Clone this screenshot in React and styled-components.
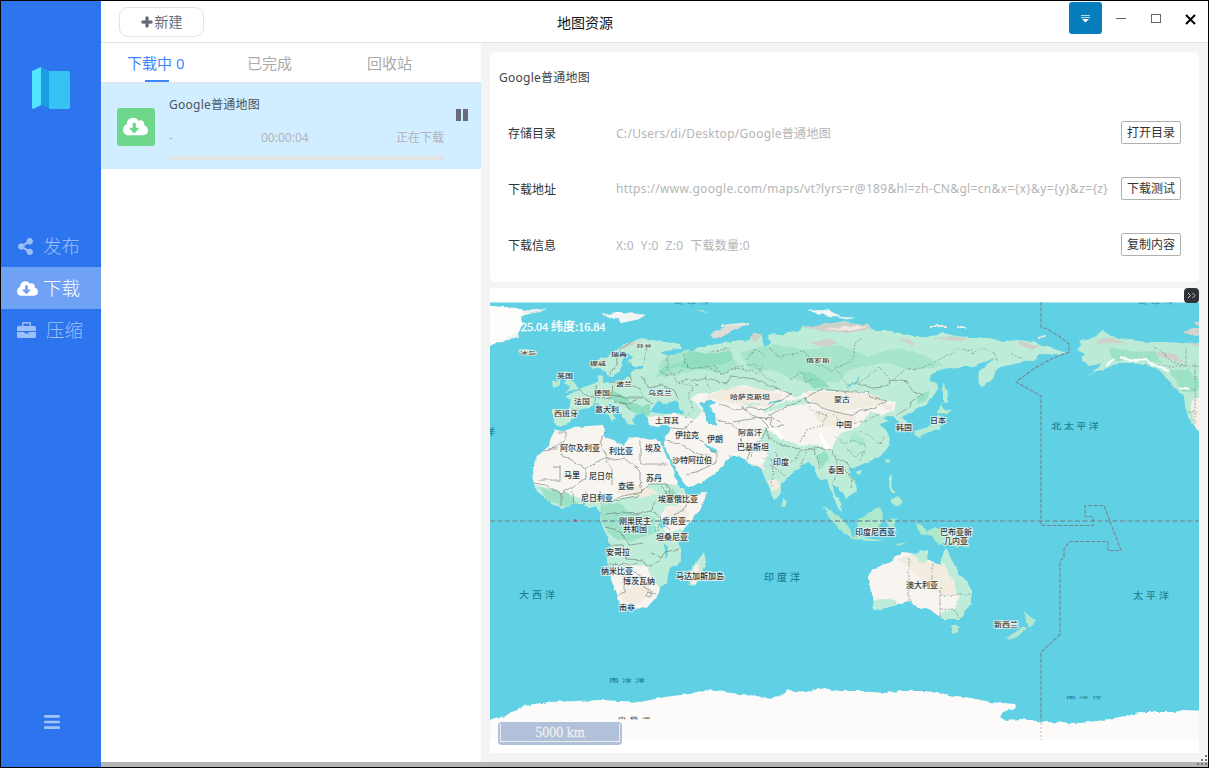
import React from "react";
import styled, { createGlobalStyle } from "styled-components";
import { FaPlus, FaShareAlt, FaCloudDownloadAlt, FaBars } from "react-icons/fa";

const sans = `"Noto Sans", "Noto Sans CJK SC", sans-serif`;
const cjk = `"Noto Sans CJK SC", sans-serif`;

const GlobalStyle = createGlobalStyle`
  * { box-sizing: border-box; }
  body { margin: 0; font-family: ${sans}; font-size: 12px; color: #444; overflow: hidden; }
  button { font: inherit; padding: 0; margin: 0; cursor: pointer; }
`;

const Window = styled.div`
  display: flex;
  width: 1209px;
  height: 768px;
  border: 1px solid #000;
  background: #fff;
`;

const Sidebar = styled.aside`
  display: flex;
  flex-direction: column;
  width: 100px;
  flex: none;
  background: #2d75ef;
`;

const Logo = styled.svg`
  display: block;
  width: 38px;
  height: 42px;
  margin: 66px 0 0 31px;
`;

const Nav = styled.nav`
  display: flex;
  flex-direction: column;
  margin-top: 116px;
`;

const NavItem = styled.div`
  display: flex;
  align-items: center;
  height: 42px;
  padding-left: ${(p) => p.$left || 16}px;
  gap: ${(p) => p.$gap}px;
  font-family: ${cjk};
  font-weight: 300;
  font-size: 18.500px;
  line-height: 40px;
  color: ${(p) => (p.$active ? "#fff" : "#9dc0f8")};
  background: ${(p) => (p.$active ? "#6fa1f5" : "transparent")};
  svg { flex: none; display: block; }
  span { height: 42px; }
`;

const MenuToggle = styled.div`
  margin: auto 0 36px 42px;
  height: 18px;
  color: #a4c3f8;
`;

const Main = styled.main`
  display: flex;
  flex-direction: column;
  flex: 1;
  min-width: 0;
`;

const Header = styled.header`
  display: flex;
  height: 42px;
  flex: none;
  border-bottom: 1px solid #e3e3e3;
`;

const NewButton = styled.button`
  display: flex;
  align-items: center;
  justify-content: center;
  gap: 2px;
  width: 85px;
  height: 30px;
  margin: 6px 0 0 18px;
  border: 1px solid #e4e4e4;
  border-radius: 9px;
  background: #fff;
  color: #666b78;
  font-family: ${cjk};
  font-size: 14px;
  line-height: 26px;
  padding-bottom: 2px;
  svg { stroke: currentColor; stroke-width: 40px; margin-top: 1px; }
`;

const Title = styled.h1`
  margin: 0 0 0 353px;
  width: 58px;
  white-space: nowrap;
  font: 400 14px/42px ${cjk};
  color: #111;
`;

const Controls = styled.div`
  display: flex;
  margin: 0 1px 0 auto;
  height: 36px;
`;

const SkinButton = styled.button`
  width: 33px;
  height: 32px;
  margin-top: 1px;
  border: 0;
  border-radius: 3px;
  background: #087dbb;
  svg { display: block; margin: 2px auto 0; }
`;

const ControlButton = styled.button`
  width: 35px;
  height: 36px;
  border: 0;
  background: none;
  svg { display: block; }
`;

const Content = styled.div`
  display: flex;
  height: 719px;
`;

const ListPane = styled.section`
  width: 380px;
  flex: none;
  background: #fff;
`;

const Tabs = styled.div`
  display: flex;
  height: 40px;
  padding-left: 26px;
  border-bottom: 1px solid #e3e3e3;
`;

const Tab = styled.div`
  display: flex;
  flex-direction: column;
  justify-content: space-between;
  width: 120px;
  flex: none;
  font-size: 15px;
  line-height: 38px;
  height: 39px;
  white-space: nowrap;
  color: ${(p) => (p.$active ? "#3f88fb" : "#aaa")};
  span { height: 37px; line-height: 41px; }
  &:last-child { width: 80px; }
`;

const TabMark = styled.i`
  display: block;
  width: 24px;
  height: 2px;
  margin-left: 18px;
  background: #3f88fb;
`;

const Task = styled.article`
  display: flex;
  height: 86px;
  padding-left: 16px;
  background: #d0eeff;
`;

const TaskIcon = styled.div`
  display: flex;
  align-items: center;
  justify-content: center;
  width: 38px;
  height: 38px;
  margin-top: 25px;
  padding: 0 1px 1px 0;
  border-radius: 3px;
  background: #6dd78b;
  color: #fff;
`;

const TaskBody = styled.div`
  width: 275px;
  margin-left: 14px;
`;

const TaskName = styled.div`
  margin-top: 12px;
  line-height: 20px;
  letter-spacing: .25px;
  color: #4d5560;
`;

const TaskMeta = styled.div`
  display: grid;
  grid-template-columns: 92px 1fr auto;
  margin-top: 13px;
  line-height: 20px;
  color: #b0b4b7;
`;

const Progress = styled.div`
  height: 4px;
  margin-top: 8px;
  background: #e3e3e3;
`;

const Pause = styled.div`
  display: flex;
  gap: 2px;
  margin: 26px 0 0 12px;
  i { width: 5px; height: 12px; background: #666b7b; }
`;

const DetailPane = styled.section`
  display: flex;
  flex-direction: column;
  flex: 1;
  gap: 6px;
  padding: 9px;
  background: #f4f4f4;
`;

const InfoCard = styled.div`
  height: 230px;
  flex: none;
  padding: 15px 18px 0;
  border-radius: 5px;
  background: #fff;
`;

const CardTitle = styled.div`
  margin-left: -9px;
  height: 22px;
  line-height: 22px;
  letter-spacing: .25px;
`;

const InfoRow = styled.div`
  display: flex;
  align-items: center;
  height: 23px;
  margin-top: ${(p) => (p.$first ? 32 : 33)}px;
`;

const RowLabel = styled.span`
  width: 108px;
  color: #333;
`;

const RowValue = styled.span`
  flex: 1;
  min-width: 0;
  color: #b5b5b5;
  white-space: pre;
  letter-spacing: ${(p) => p.$spacing}px;
`;

const RowButton = styled.button`
  width: 60px;
  height: 23px;
  border: 1px solid #b0b0b0;
  border-radius: 2px;
  background: #fff;
  color: #333;
  line-height: 20px;
`;

const MapCard = styled.div`
  position: relative;
  height: 465px;
  background: #fff;
  > svg.map { display: block; padding-top: 14px; box-sizing: content-box; }
`;

const Expand = styled.div`
  position: absolute;
  right: 0;
  top: 0;
  width: 15px;
  height: 15px;
  border-radius: 4px;
  background: #2f3336;
  svg { display: block; }
`;

const Coordinates = styled.div`
  position: absolute;
  left: 31px;
  top: 29px;
  color: #fff;
  font: 12px/20px "Liberation Serif", "Noto Sans CJK SC", serif;
  -webkit-text-stroke: .3px #fff;
  white-space: nowrap;
`;

const Scale = styled.div`
  position: absolute;
  left: 8px;
  top: 434px;
  width: 124px;
  height: 23px;
  padding: 2px;
  border-radius: 4px;
  background: #b1c1da;
`;

const ScaleBar = styled.div`
  height: 18px;
  border: 1px solid #eee;
  border-top: 0;
  color: #eee;
  text-align: center;
  font: 14px/17px "Liberation Serif", serif;
  -webkit-text-stroke: .3px #eee;
`;

const StatusBar = styled.footer`
  display: flex;
  justify-content: flex-end;
  height: 5px;
  background: #b4b4b4;
  svg { display: block; margin-top: -7px; overflow: visible; }
`;

// Country names: text, centre x, centre y, height factor, character pitch.
const countries = [
  ["冰岛", 528, 353, 0.5, 8], ["芬兰", 644, 346.5, 0.5, 8], ["瑞典", 619, 354, 0.55, 8], ["挪威", 598, 363.5, 0.55, 8],
  ["英国", 565, 376, 0.65, 8], ["波兰", 624, 384, 0.7, 8], ["德国", 602, 393, 0.75, 8], ["乌克兰", 660, 393, 0.75, 8],
  ["法国", 582, 402, 0.8, 8], ["西班牙", 566, 413, 0.85, 8], ["意大利", 607, 409, 0.85, 8], ["土耳其", 667, 420, 0.85, 8],
  ["伊拉克", 687, 435.5, 0.95, 8], ["伊朗", 715, 439.5, 0.95, 8], ["俄罗斯", 818, 360, 0.55, 8],
  ["哈萨克斯坦", 750, 396.5, 0.75, 8], ["蒙古", 842, 400, 0.8, 8], ["中国", 844, 424, 0.9, 8], ["韩国", 904, 427, 0.9, 8],
  ["日本", 938, 420, 0.9, 8], ["阿富汗", 750, 432.5, 0.9, 8], ["巴基斯坦", 753, 447, 0.95, 8], ["印度", 781, 462, 1, 8], ["泰国", 836, 469.5, 1, 8],
  ["阿尔及利亚", 580, 448, 0.95, 8], ["利比亚", 621, 451.5, 0.95, 8], ["埃及", 653, 448.5, 0.95, 8], ["沙特阿拉伯", 692, 460.5, 0.95, 8],
  ["马里", 572, 475, 1, 8], ["尼日尔", 601, 476, 1, 8], ["查德", 626, 486, 1, 8], ["苏丹", 654, 478, 1, 8],
  ["尼日利亚", 597, 497.5, 1, 8], ["埃塞俄比亚", 678, 499, 1, 8], ["共和国", 635, 529.3, 0.95, 8], ["刚果民主", 635, 520.8, 0.95, 8], ["肯尼亚", 674, 520.5, 1, 8],
  ["坦桑尼亚", 672, 537, 1, 8], ["安哥拉", 618, 552, 1, 8], ["纳米比亚", 617, 571, 1, 8], ["博茨瓦纳", 639, 581, 1, 8],
  ["马达加斯加岛", 700, 576, 1, 8], ["南非", 627, 607, 0.9, 8], ["印度尼西亚", 875, 532, 1, 8],
  ["几内亚", 956, 541, 0.95, 8], ["巴布亚新", 956, 532.500, 0.95, 8], ["澳大利亚", 922, 585, 1, 8], ["新西兰", 1006, 625, 0.8, 8],
  ["南极洲", 634, 718, 0.25, 12],
];

const oceans = [
  ["北太平洋", 1075, 426, 0.85, 12.5], ["太平洋", 1151, 596, 0.9, 13], ["印度洋", 782, 577.5, 1, 13],
  ["大西洋", 537, 595.5, 0.9, 13], ["南冰洋", 627, 680, 0.5, 13], ["南冰洋", 1084, 697.5, 0.35, 13],
  ["北冰洋", 692, 303.8, 0.15, 13], ["北冰洋", 1156, 303.8, 0.15, 13], ["洋", 490, 432, 0.9, 8],
];

function MapLabel({ item, ocean }) {
  const [text, x, y, stretch, pitch] = item;
  const size = ocean ? 10 : 8;
  const spacing = Math.max(0, pitch - size);
  return (
    <text
      transform={`translate(${x + spacing / 2} ${y}) scale(1 ${stretch})`}
      y="3"
      textAnchor="middle"
      fontSize={size}
      fontWeight={500}
      letterSpacing={spacing}
      fill={ocean ? "#1c7f92" : "#30363c"}
      stroke={ocean ? "none" : "#f2f7f5"}
      strokeWidth={ocean ? 0 : 2.2}
      strokeOpacity=".8"
      strokeLinejoin="round"
      paintOrder="stroke"
    >
      {text}
    </text>
  );
}

const EURASIA = "M553 409L553 423L559 427L568 423L575 417L577 411L585 408L592 406L598 404L603 410L608 415L612 421L616 419L611 412L606 405L612 404L619 411L623 418L628 424L635 425L632 418L637 414L645 413L648 418L649 425L658 427L668 425L671 428L666 437L664 443L665 448L671 459L678 472L684 483L688 488L700 483L714 474L724 464L730 457L722 452L714 453L708 448L702 441L713 448L722 455L735 456L745 459L752 466L759 466L764 475L768 487L774 499L781 495L782 484L790 476L800 468L808 462L814 467L820 480L827 479L831 492L837 505L842 513L841 503L833 493L832 484L838 488L843 493L846 498L857 491L856 484L849 474L850 468L858 466L865 463L878 458L888 448L890 438L886 430L880 424L889 421L883 418L893 416L899 422L900 431L905 430L907 422L903 417L912 411L925 405L935 395L938 384L930 381L930 375L943 369L958 367L970 367L981 363L994 358L988 364L979 371L978 379L981 388L994 378L994 372L1004 366L1019 363L1037 360L1039 354L1053 354L1067 353L1054 349L1046 347L1036 342L1018 340L1000 341L990 338L970 338L957 336L943 333L930 337L917 337L905 334L890 331L873 331L869 325L855 324L845 321L828 324L803 327L800 330L790 332L780 335L768 334L771 343L763 348L762 333L752 333L751 341L738 340L729 342L712 345L705 347L698 347L692 352L685 350L679 354L665 356L661 352L672 350L682 348L680 344L672 343L652 340L642 338L633 341L622 345L614 351L608 357L599 359L590 363L591 370L600 368L606 371L607 376L613 377L620 370L623 363L622 358L628 353L632 357L628 362L633 366L645 366L639 369L631 370L629 376L623 381L610 382L603 383L603 375L599 374L598 380L592 384L582 388L575 392L566 396L571 400L568 409Z";
const AFRICA = "M555 430L564 431L575 427L588 426L603 425L605 430L604 436L610 439L617 442L625 445L629 438L637 437L645 439L655 440L661 442L663 448L667 458L674 470L677 484L683 490L687 495L697 494L707 492L706 499L699 511L690 522L681 532L678 540L680 550L681 562L668 570L667 582L659 588L657 597L648 606L636 609L625 609L620 605L617 594L612 582L610 572L607 560L610 545L609 538L602 527L600 520L601 513L597 506L590 507L583 505L575 503L562 508L552 504L541 495L533 483L532 470L536 458L543 451L549 446L550 440Z";
const AUSTRALIA = "M869 576L871 571L880 566L890 562L894 557L903 552L912 553L917 556L919 551L928 550L927 558L934 563L941 565L943 555L946 549L951 559L958 572L965 580L972 591L970 606L960 619L943 619L933 612L926 609L918 608L911 601L901 603L889 607L873 610L875 602L870 588Z";
const ALASKA = "M1102 331L1112 337L1130 340L1148 342L1165 342L1183 343L1210 342L1210 436L1199 431L1189 420L1185 406L1184 395L1174 388L1164 374L1150 366L1132 363L1117 363L1105 369L1094 372L1084 378L1100 367L1102 363L1090 366L1081 359L1085 354L1077 350L1083 344L1079 342L1090 339Z";
const ANTARCTICA = "M480 721L490 719L506 716L512 711L522 707L534 704L550 702L575 701L600 700L640 702L665 697L690 694L704 690L718 691L731 693L757 696L770 699L785 693L788 690L805 692L824 688L840 691L860 691L885 693L900 691L925 691L940 693L955 696L972 698L990 702L1014 704L1016 708L1003 712L1000 717L1006 721L1020 719L1045 722L1080 723L1097 721L1120 717L1145 712L1175 712L1183 710L1210 711L1210 755L480 755Z";

function WorldMap() {
  return (
    <svg className="map" width="709" height="438" viewBox="490 302 709 438" fontFamily='"Noto Sans CJK SC", sans-serif'>
      <defs>
        <clipPath id="eurasia"><path d={EURASIA} /></clipPath>
        <clipPath id="africa"><path d={AFRICA} /></clipPath>
        <clipPath id="australia"><path d={AUSTRALIA} /></clipPath>
        <clipPath id="alaska"><path d={ALASKA} /></clipPath>
        <filter id="coast" filterUnits="userSpaceOnUse" x="470" y="290" width="750" height="470">
          <feTurbulence type="fractalNoise" baseFrequency=".14" numOctaves="2" seed="4" />
          <feDisplacementMap in="SourceGraphic" scale="4" xChannelSelector="R" yChannelSelector="G" />
        </filter>
      </defs>
      <rect x="490" y="302" width="709" height="438" fill="#60d0e4" />
      <rect x="490" y="302" width="709" height="1" fill="#a9e3ed" />

      <g filter="url(#coast)">
        <path d="M484 305L503 307L518 308L527 314L520 317L523 324L519 331L518 338L503 341L484 348Z" fill="#fdfdfc" />
        <path d="M522 311l24-2-12 4-10 2M505 337l12-3 2 3-12 2" fill="#eef3f0" stroke="#e6efea" strokeWidth=".5" />
        <path d="M517 350l8-1 8 1 5 2-6 3-9-1z" fill="#c5ebdc" />
        <path d="M603 315l17-3 24 3-6 4-17 4-3-5zM697 311l10 1M809 311l18-1 13 6-9 0zM838 317l16 1-9 1z" fill="#f2f5f3" stroke="#f2f5f3" strokeWidth=".6" />
        <path d="M711 337l4-6 10-4 14-3 12-1-14 5-10 6-8 4z" fill="#dcddd9" />
        <path d="M722 326l27-3M957 327l9 0M931 326l17 0M1038 337l9-1" stroke="#e6eae4" fill="none" strokeWidth="1.8" />
        <path d="M1183 333l9-5 9 0v7l-13 0zM1192 323l9-2v4z" fill="#d1d3ce" />
        <path d="M561 372l7-1-2 6 8 5 5 7-15 3 6-4-6-5 3-3zM552 381l8-1 0 6-7 2z" fill="#b9ead4" />
        <path d="M943 382l5 10-1 9-4 2zM940 405l5 4 7 1-5 4-9-1zM940 414l1 7-1 8-11 3-7 2-2 4-5-2-1-5 12-3 9-6zM887 458l3 1-1 4-3-1zM857 471l5-1-2 5-4-2zM889 473l3 5-1 7 5 8-4 0-4-9zM890 500l8-4 5 6-4 4-8-3zM783 498l4 4-2 5-3-1z" fill="#b6ebd4" />
        <path d="M822 507l8 4 12 8 8 10 3 8-8-2-11-12zM850 536l13 1 21 4-15 0-17-2zM858 519l10-5 10-7 4 5-1 12-6 8-10 1-8-7zM886 520l12-1-5 5 4 8-7-2zM915 524l8 1 3 6 9-4 18 7 8 8 9 4-13 1-7-5-12 2-6-8-12-3zM896 544l10-2-8 4z" fill="#aee8cd" />
        <path d="M704 552l2 10-6 15-5 9-6-1-1-10 5-8z" fill="#c4ebd9" />
        <path d="M697 564l3 2-5 18-5 0 1-10z" fill="#f6f0e9" />
        <path d="M951 626l8 0-1 6-5 2zM1025 611l4 5 7 4-6 8-4-5zM1022 627l4 2-9 8-7 3-4-2z" fill="#b3e8d0" />
        <path d={EURASIA} fill="#bdecd8" />
        <path d={AFRICA} fill="#f8f4ef" />
        <path d={AUSTRALIA} fill="#f8f4ef" />
        <path d={ALASKA} fill="#bbebd6" />
        <path d={ANTARCTICA} fill="#fcfbfa" />

        <g clipPath="url(#eurasia)">
          <path d="M664 358L690 350L708 354L730 352L738 365L725 374L700 369L680 374L655 378ZM740 352L775 344L804 350L840 345L868 356L900 348L930 358L944 366L909 370L885 362L850 370L838 382L803 382L772 370L750 371Z" fill="#a6e5ca" />
          <path d="M690 351l19 3 20-4 4 10-27 9-33-2-14 8 5-9 17-3zM798 371l18 3 14 13-17 1zM604 395l9-4 15 8 14 8 8-4 0 12-15-2z" fill="#90dec0" />
          <path d="M640 418L675 414L694 419L703 411L691 399L698 393L710 393L744 385L767 391L784 389L795 398L808 391L841 391L869 393L878 399L897 402L895 411L882 415L870 411L860 426L841 433L835 441L831 452L805 449L783 441L763 428L760 439L768 456L762 466L740 462L707 485L680 495L660 440Z" fill="#f8f4ef" />
          <path d="M735 386L760 389L784 394L773 407L744 406L716 399L701 398ZM806 392L845 392L880 397L886 402L862 408L840 411L814 404ZM812 413l18-3 26 6 0 8-32 3zM768 481l9-2 4 9-9 3z" fill="#f2ebdf" />
          <path d="M765 409l22-8 18-3 7 4-31 6-17 6zM741 402l10 2 12-1-11 4zM763 427l15 10 21 8 21 1 13 5-16 3-25-5-25-12z" fill="#bdecd8" />
          <path d="M764 427l11 3 7 9M819 434l5 6 4 10" stroke="#fff" strokeWidth="3.5" fill="none" />
          <path d="M747 331l16 4-8 8zM800 327l30-6 38 3 2 5-21 4-30-3zM809 343l18-4 11 4-12 4zM930 338l24-2 16 4-14 1zM1018 341l22 5-8 3-12-4zM902 337l13 6-2 3-13-7zM625 345l20-5-10 4-12 5z" fill="#d0d0ca" />
          <path d="M824 329l30-3 14 1-20 4zM853 325l15 3" fill="#f3e8df" />
          <path d="M880 403l15 3-4 6-8-4zM753 464l8 0 4 5-6 2z" fill="#f3e8df" />
          <path d="M815 457l11-7 3 9-7 8zM915 397l15-7-3 9-9 5z" fill="#99e1c4" />
          <path d="M853 432l14 9-5 5-12-4z" fill="#abe6ce" />
        </g>
        <path d="M650 412L655 402L661 401L666 406L676 400L679 407L684 413L665 414ZM699 404L708 400L716 402L709 407L715 412L716 426L706 421L705 413Z" fill="#60d0e4" />
        <path d="M768 403l12-2M847 387l8-3 4-7" stroke="#60d0e4" strokeWidth="1.5" fill="none" />

        <g clipPath="url(#africa)">
          <path d="M528 483L548 488L565 493L580 498L600 493L615 500L636 495L650 484L670 484L681 486L689 500L677 506L666 505L659 518L666 533L684 528L684 561L674 568L669 584L659 588L654 578L645 566L627 564L606 569L600 520L560 512Z" fill="#bdecd8" />
          <path d="M601 505l18-2 12 11 24 3-2 16-21 8-18-3-14-17zM540 487l15 5 15 3 9 8-13 4-19-6zM662 494l11-6 5 7-9 7z" fill="#9de2c6" />
          <path d="M620 485l21 0 18 8-15 5-27-5zM665 508l14-3 11 8-8 12-12-4zM621 591l25-10 6 10-11 12-17 4z" fill="#f2ebdf" />
        </g>
        <path d="M661 520l5 1 0 5-4 1zM664 545l3 4-1 9M655 527l0 5" stroke="#60d0e4" fill="#60d0e4" strokeWidth="1.5" />
        <g clipPath="url(#australia)">
          <path d="M905 548l27 1-3 11-5 3-12-8zM939 548l9-1 13 28 12 12-1 20-14 14-23-2 9-8 11-1 4-13-6-8-8-17-8-12zM870 600l10-1 16 1 1 5-26 7z" fill="#bdecd8" />
          <path d="M897 559l14-4 20 8 11-3 10 19 5 12-12 5-12-6-12-11-12-12z" fill="#f2ebdf" />
          <path d="M915 556l8 1 5 5-8 1z" fill="#bdecd8" />
        </g>
        <g clipPath="url(#alaska)">
          <path d="M1095 342l11-5 22 6-16 0-14 2zM1153 352l17 1 14 7-8 2-20-8zM1188 343h14v5z" fill="#d0d0ca" />
          <path d="M1170 370l18-1 12 13-2 10-14 0-13-17zM1110 348l27 4 16-1 11 12-19-2-13-2-20 2z" fill="#9ee2c6" />
          <path d="M1190 402l14-9v43h-7z" fill="#f5eee6" />
          <path d="M1107 365l7-6M1120 357l12 4 15-1 8 6 14 5M1180 387l9 2" stroke="#fff" strokeWidth="2.2" fill="none" />
        </g>
      </g>

      <g fill="none" stroke="#6e8079" strokeWidth=".65" filter="url(#coast)">
        <path d="M558 432l8 0 0 8-16 10-7 1M548 449h9M554 466h6l0 14h-22M561 455l25 14 20-12-6-16 5-8M605 457l10 3 10-2 15 12M640 440l0 24h28M586 469l0 9-12 8-11 6M606 458l6 12 0 15M640 470l0 10 2 12-24 5M533 483l13 2 8 6 11 2M561 492l0 14M572 489l3 14M586 492l-2 13M600 491l1 14M603 503l17-4 17-3 12-12 18 0 3 10M606 514l16-2 12 2 18-3 3-11M653 512l8 5-3 14 7 8M605 527l13 3 12 15 13-2M608 545h14l4 14 17 1 3 7M609 564l21 1 8-2M624 566l0 26-6 3M630 569l12 8 2 10 12 7M646 567l13-6 6-9 14-3M651 553l12 4M665 539l15 0M661 486l8 8 12 2 8 4-6 11-10 4M670 530l-7-9M648 592l4 1-2 4-4-1z" />
        <path d="M573 409l5 1M578 389l9 8 9 0-2 8M597 384l-2 12 15 3 2-14M612 382l16 3 12 3 2 10-16 0-15-3M632 385l-3-10M641 376l8 12 12-3 13 5 5 9M642 397l-14 7-13-2M621 401l10 9M643 398l10 6M610 375l7-12 3-14 13-8M690 381l21-2 16 5 4-8 24 3 20 9 17 6-14 7-12 9-17-3-14 4-8-5-8-2M694 420l-10 9-13-1M685 426l8 11 11 5M666 441l13 3 18 10 11 1M708 448l8 5 0 10-20 9-10 2M717 420l15 4 10 9-1 13 9 6-3 7M741 406l13 11 17 2 1 8 12-1M733 422l11-2 16-2 8 8-6 13-8 5-3 13M765 427l5 10 10 8 26 5 17-2 8 3M781 422l-13-6 18-9 16-7M804 399l21 10 24 6 26-8 12-6-17-4-2-5-19 0-27-3-12 6-6 5M855 382l17 6 12-1 8-7 16 2 5 10 9 2-11 8-1 6-13 6M832 451l5 10 0 12-4 10M843 466l9 14-1 7M839 460l7 2 6 7M806 452l-5 14M815 449l5 20" />
        <path strokeDasharray="2 1.4" d="M667 356l0 12 9 12 17 7-6 11 7 12-8 8M684 355l3 13 20-2 13 8 17-6 21 5 5-8M660 371l12 5 11-6M676 384l12-6 10 7M709 352l21-4M714 365l7 10 15-8 20-3 8 12 13 7M770 348l8 9 25-5 13 12 15 6 21-9 3-18 8-6M838 372l10 13 14-4 17-13 12 13 15-12 17-1 21-11 13-8 15 1M809 402l1 8 16 5-3 10-17 5-6 12M833 414l13 13 17-5 17-8M833 435l9 8 14-3 11 8-8 13M860 431l9 4 10 9 7-8M846 449l10 8 9-6M775 452l5 12 16-4 4-9M770 464l15 12M763 458l10 3-1 25M971 354l12-6 11 5 3 8M1012 354l12 6M1153 345l19 17 14 4 0-20M1155 366h44M1189 412h10M909 558v43M932 564v20M940 588v31M940 595h30M941 609l12 1 7 7M1195 362v62M646 348l-2 16M747 359l8-10 10 6M791 379l10-6 5 8 12-2M704 374l5 14" />
      </g>

      <g fill="none" stroke="#6f98a1" strokeWidth="1.1">
        <path strokeDasharray="5 2.5" strokeWidth="1.5" d="M490 521h709" />
        <path strokeDasharray="4 1.5" d="M1041 302v25l6 2 12 7 10 8v8l-18 7-16 9-19 14 25 14v129.500h52v-9h-8v-11h19l17 45h-13v-9h-38l-6 7v8l-4 5v73l-19 18v68" stroke="#77848f" />
        <path strokeDasharray="2 2" d="M1041 723v17" stroke="#edd5d8" strokeWidth="2" />
      </g>
      <circle cx="575.5" cy="520.5" r="1.5" fill="#c45564" />
      {countries.map((item) => <MapLabel key={item[0]} item={item} />)}
      {oceans.map((item, i) => <MapLabel key={i} item={item} ocean />)}
    </svg>
  );
}

const details = [
  { label: "存储目录", value: "C:/Users/di/Desktop/Google普通地图", action: "打开目录", spacing: 0.29 },
  { label: "下载地址", value: "https://www.google.com/maps/vt?lyrs=r@189&hl=zh-CN&gl=cn&x={x}&y={y}&z={z}", action: "下载测试", spacing: 0.335 },
  { label: "下载信息", value: "X:0  Y:0  Z:0  下载数量:0", action: "复制内容", spacing: 0.3 },
];

export default function App() {
  return (
    <>
      <GlobalStyle />
      <Window>
        <Sidebar>
          <Logo viewBox="0 0 38 42">
            <path d="M0 4L9 0V38L1.5 42L0 41Z" fill="#52e5ff" />
            <path d="M9 0L17 4V41L9 38Z" fill="#1b9de3" />
            <path d="M17 4H36.5L38 5.5V40.5L36.5 42H17Z" fill="#37c2f4" />
          </Logo>
          <Nav>
            <NavItem $gap={9}><FaShareAlt size={17} /><span>发布</span></NavItem>
            <NavItem $active $gap={5}><FaCloudDownloadAlt size={21} /><span>下载</span></NavItem>
            <NavItem $gap={10}>
              <svg width="19" height="17" viewBox="0 0 19 17" fill="currentColor">
                <path d="M5 4V1.5Q5 0 6.5 0H12.5Q14 0 14 1.5V4H17.5Q19 4 19 5.5V9H0V5.5Q0 4 1.500 4ZM6.500 4H12.500V1.500H6.500ZM0 10H7.500V11.500H11.500V10H19V14.500Q19 16 17.500 16H1.500Q0 16 0 14.500Z" fillRule="evenodd" />
              </svg>
              <span>压缩</span>
            </NavItem>
          </Nav>
          <MenuToggle><FaBars size={18} /></MenuToggle>
        </Sidebar>
        <Main>
          <Header>
            <NewButton><FaPlus size={12} />新建</NewButton>
            <Title>地图资源</Title>
            <Controls>
              <SkinButton>
                <svg width="9" height="8" viewBox="0 0 9 8">
                  <path d="M0 .5H9M0 2.5H9" stroke="#b7d9ea" />
                  <path d="M1 4H8L4.5 7.5Z" fill="#fff" />
                </svg>
              </SkinButton>
              <ControlButton>
                <svg width="35" height="36"><path d="M14 17.5H24" stroke="#666" /></svg>
              </ControlButton>
              <ControlButton>
                <svg width="35" height="36"><rect x="14.5" y="13.5" width="9" height="8" fill="none" stroke="#666" /></svg>
              </ControlButton>
              <ControlButton>
                <svg width="35" height="36"><path d="M14 14L23 23M23 14L14 23" stroke="#000" strokeWidth="2" /></svg>
              </ControlButton>
            </Controls>
          </Header>
          <Content>
            <ListPane>
              <Tabs>
                <Tab $active><span>下载中 0</span><TabMark /></Tab>
                <Tab><span>已完成</span></Tab>
                <Tab><span>回收站</span></Tab>
              </Tabs>
              <Task>
                <TaskIcon><FaCloudDownloadAlt size={25} /></TaskIcon>
                <TaskBody>
                  <TaskName>Google普通地图</TaskName>
                  <TaskMeta><span>-</span><span>00:00:04</span><span>正在下载</span></TaskMeta>
                  <Progress />
                </TaskBody>
                <Pause><i /><i /></Pause>
              </Task>
            </ListPane>
            <DetailPane>
              <InfoCard>
                <CardTitle>Google普通地图</CardTitle>
                {details.map((row, i) => (
                  <InfoRow key={row.label} $first={i === 0}>
                    <RowLabel>{row.label}</RowLabel>
                    <RowValue $spacing={row.spacing}>{row.value}</RowValue>
                    <RowButton>{row.action}</RowButton>
                  </InfoRow>
                ))}
              </InfoCard>
              <MapCard>
                <WorldMap />
                <Coordinates>25.04 纬度:16.84</Coordinates>
                <Expand>
                  <svg width="15" height="15"><path d="M4 5L6.5 7.5L4 10M8.5 5L11 7.5L8.5 10" fill="none" stroke="#ccc" /></svg>
                </Expand>
                <Scale><ScaleBar>5000 km</ScaleBar></Scale>
              </MapCard>
            </DetailPane>
          </Content>
          <StatusBar>
            <svg width="12" height="12" fill="#777">
              <path d="M9 0h2v2h-2zM5 4h2v2H5zM9 4h2v2h-2zM1 8h2v2H1zM5 8h2v2H5zM9 8h2v2h-2z" />
            </svg>
          </StatusBar>
        </Main>
      </Window>
    </>
  );
}
